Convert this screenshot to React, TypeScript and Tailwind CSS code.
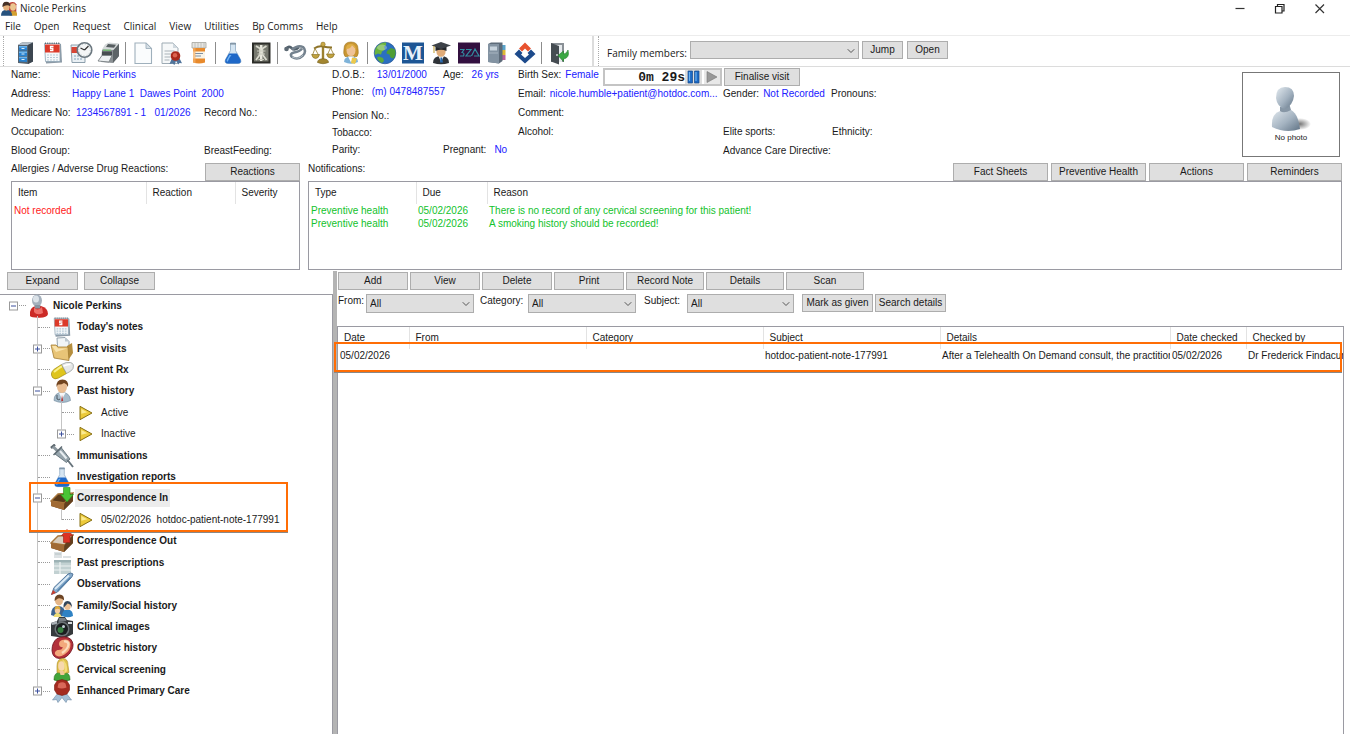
import React from 'react';
import { ChevronDown } from 'lucide-react';

type IconProps = { size?: number };

function Svg({ size = 24, children }: IconProps & { children: React.ReactNode }) {
  return (
    <svg width={size} height={size} viewBox="0 0 24 24" aria-hidden="true" className="block shrink-0">
      {children}
    </svg>
  );
}

/* ---------- toolbar icons ---------- */

const Cabinet = () => (
  <Svg>
    <path d="M5 4l4-2.500h11v19L15 23l-10-1z" fill="#56636f" />
    <path d="M5 4l4-2.500h11L15 4z" fill="#b4bfc9" />
    <path d="M15 4l5-2.500v19L15 23z" fill="#3c4650" />
    <path d="M6 5h8v4.600H6zM6 10.400h8V15H6zM6 15.800h8V21l-8-.6z" fill="#2a82cf" />
    <path d="M6 5h8v1.500H6zM6 10.400h8v1.500H6zM6 15.800h8v1.500H6z" fill="#6db5ee" />
    <path d="M8.500 7.500h3M8.500 13h3M8.500 18.500h3" stroke="#dceefa" strokeWidth="1" />
  </Svg>
);

const Calendar = ({ size }: IconProps) => (
  <Svg size={size}>
    <path d="M4 3h16l1 18.500L5 22.500z" fill="#8c9aa6" />
    <path d="M3.500 2.500h15.500v18H4.500z" fill="#f5f8fa" stroke="#8da3b3" strokeWidth=".8" />
    <path d="M4 3.500h14.600v8H4z" fill="#dc3a2a" />
    <path d="M12.500 5.500h-3v2h2.300v2H9" stroke="#fff" strokeWidth="1.300" fill="none" />
    <path d="M6 14h11M6 16.500h11M6 19h11" stroke="#b7c9d6" strokeWidth="1.200" strokeDasharray="2 1" />
    <path d="M4 2.200h15" stroke="#5b6872" strokeWidth="1.400" strokeDasharray="1 1.200" />
  </Svg>
);

const CalendarClock = () => (
  <Svg>
    <path d="M2 4h14v17.500H3z" fill="#eaf0f4" stroke="#8295a4" strokeWidth=".9" />
    <path d="M2.500 6h13v6h-13z" fill="#d84535" />
    <path d="M5 15h9M5 18h9" stroke="#a7bccb" strokeWidth="1.500" strokeDasharray="2 1" />
    <circle cx="15.500" cy="9" r="7.300" fill="#f4f6f7" stroke="#6c7880" strokeWidth="1.600" />
    <path d="M15.500 9l4-4M15.500 9l-4-2" stroke="#333" strokeWidth="1.200" />
    <circle cx="15.500" cy="9" r="5.800" fill="none" stroke="#9aa" strokeWidth=".8" strokeDasharray=".8 2.200" />
  </Svg>
);

const Printer = () => (
  <Svg>
    <path d="M5 9l6-7 11 1v12l-6 7-12-1z" fill="#8b9194" />
    <path d="M8 3.500l4-2L22 2.500 17 9 5 8.500z" fill="#d5d9da" />
    <path d="M11 3l8 .7-2 3-8-.6z" fill="#575e61" />
    <path d="M16 9.500l6-6.500v12l-6 7z" fill="#5d6467" />
    <path d="M5 10.500h10v4H5z" fill="#474d50" />
    <path d="M1 20l4-5.500h10L12 21z" fill="#edf0f1" stroke="#7a8184" strokeWidth=".9" />
    <path d="M6 9.200h8" stroke="#6fc16b" strokeWidth="1.200" />
  </Svg>
);

const BlankPage = () => (
  <Svg>
    <path d="M4 2h11l5.500 5.500V22.500H4z" fill="#fafcfd" stroke="#9fb0bc" strokeWidth="1.100" />
    <path d="M15 2v5.500h5.500z" fill="#d5dfe6" stroke="#9fb0bc" strokeWidth=".9" />
  </Svg>
);

const Certificate = () => (
  <Svg>
    <path d="M3 2h11l5 5v15.500H3z" fill="#f6f8f9" stroke="#9eabb4" strokeWidth="1" />
    <path d="M14 2v5h5z" fill="#cfd8de" />
    <path d="M5.500 10h10M5.500 13h8M5.500 16h6M5.500 19h5" stroke="#a9b2b8" strokeWidth="1" />
    <path d="M13 17l-2.500 6 3-.5 2 1.500 1.500-4 2.500 3.500 1-1.500 2.500.2-3-6z" fill="#51759c" />
    <circle cx="16.500" cy="15" r="4.800" fill="#a92a1c" />
    <circle cx="16" cy="14.300" r="2.200" fill="#dc6450" />
  </Svg>
);

const PillBottle = () => (
  <Svg>
    <path d="M5 1.500h14V7H5z" fill="#e5e5e2" stroke="#a3a39d" strokeWidth=".8" />
    <path d="M8 2v5M11 2v5M14 2v5M17 2v5" stroke="#b8b8b1" strokeWidth=".8" />
    <path d="M6 7h12v14.500q-6 2-12 0z" fill="#e88a2c" />
    <path d="M6 10.500h12v7H6z" fill="#f9f4e8" />
    <path d="M8 12.500h8M8 15h6" stroke="#7d8fa2" strokeWidth="1" />
    <path d="M6 7h2.500v15L6 21.500z" fill="#f5b068" opacity=".7" />
  </Svg>
);

const Flask = ({ size }: IconProps) => (
  <Svg size={size}>
    <path d="M9.500 2h5v7.500l5 9q1.500 4-2.500 4H7q-4 0-2.500-4l5-9z" fill="#d5e5f2" stroke="#8ea9c2" strokeWidth=".8" />
    <path d="M8 12.500h8l3.500 6q1.300 3.800-2.500 4H7q-3.800-.2-2.500-4z" fill="#1f68c8" />
    <path d="M8.500 14l-2.800 5q-.4 1.500 1 1.700 1.500-4 3.800-6.700z" fill="#6eb2f2" />
    <path d="M9 2h6v1.600H9z" fill="#8597a7" />
  </Svg>
);

const Xray = () => (
  <Svg>
    <path d="M3 1.500h18.500v21H3z" fill="#2c2d29" />
    <path d="M5 3.500h14.500v17H5z" fill="#77796f" />
    <path d="M12.200 4v16" stroke="#e9e9de" strokeWidth="2.400" />
    <path d="M7 5l4 2.500v6L7 19M17.500 5l-4 2.500v6l4 5.500" stroke="#dcdcd0" strokeWidth="1.700" fill="none" />
    <path d="M8 10h8.500M8.500 13h7.500M9.500 18.500h5.500" stroke="#c9cabd" strokeWidth="1" />
  </Svg>
);

const Shoulder = () => (
  <Svg>
    <path d="M3 8q3-4 6-.5 3 2.500 7-1.500" stroke="#53616c" strokeWidth="2.600" fill="none" />
    <path d="M9 8.500q6-5 11-2.500 4 4 0 8.500-5 5-11 1.500-3-3 2-4.500 6-1 8-4" stroke="#74828e" strokeWidth="2.500" fill="none" />
    <path d="M9 16q7 3 11-2" stroke="#b3bdc5" strokeWidth="1" fill="none" />
    <circle cx="3.500" cy="8" r="2.300" fill="#5d6a74" />
  </Svg>
);

const Scales = () => (
  <Svg>
    <path d="M12 3v16" stroke="#9c8130" strokeWidth="2.400" />
    <path d="M3 7.500q5-3 9-2t9 1" stroke="#8d732a" strokeWidth="2" fill="none" />
    <circle cx="12" cy="3.300" r="2.200" fill="#caa947" stroke="#80691f" strokeWidth=".5" />
    <path d="M4 7.500L1.500 14M4 7.500L7.500 14M19.500 7l-3 6.500M19.500 7l3.300 6.500" stroke="#a38b43" strokeWidth=".9" />
    <path d="M.6 13.500h8q-1 4-4 4t-4-4zM15.500 13h8q-1 4-4 4t-4-4z" fill="#c1a23f" stroke="#80691f" strokeWidth=".6" />
    <path d="M6.500 21.500q0-3.500 5.500-3.800 5.500.3 5.500 3.800-5.500 2.500-11 0z" fill="#a38630" stroke="#755f1b" strokeWidth=".6" />
  </Svg>
);

const BlondPatient = () => (
  <Svg>
    <path d="M5 8q0-7 7-7t7 7q1 5-1 7.500H6Q4 13 5 8z" fill="#c99632" stroke="#a0741d" strokeWidth=".6" />
    <ellipse cx="12" cy="9.500" rx="4.500" ry="5.600" fill="#efc397" />
    <path d="M7 8q5 0 6-4 2 3 4 4-1-5-5-5-5 0-5 5z" fill="#dfae45" />
    <path d="M5 21q0-5.500 7-5.500t7 5.500q-7 3.500-14 0z" fill="#7fb3d9" />
    <path d="M9 15.500l3 6 3-6z" fill="#fff" />
    <path d="M13 16.500l5 1-2 5.500-4-1z" fill="#edc94c" />
  </Svg>
);

const Globe = () => (
  <Svg>
    <circle cx="12" cy="12" r="10.800" fill="#2b6fc0" stroke="#27508a" strokeWidth=".6" />
    <path d="M4 5.500q4-4.500 9-4 1 3-2 4l1 3-3 2-1 3-3-1-3 1.500Q1 9 4 5.500z" fill="#69b33e" />
    <path d="M14 10l4-3 4 1.500q1.500 5-1.500 9l-3-1-1-3-3-1z" fill="#4f9e35" />
    <path d="M6 15.500l4 1.500 1 3-2 2q-4-2-5-5.500z" fill="#5cab3a" />
    <ellipse cx="9" cy="6.500" rx="5" ry="3" fill="#fff" opacity=".3" />
  </Svg>
);

const MimsM = () => (
  <Svg>
    <path d="M1 1.500h22v21H1z" fill="#1d5695" />
    <text x="12" y="19" textAnchor="middle" fontFamily="Liberation Serif, serif" fontWeight="700" fontSize="21" fill="#e8f2fa">M</text>
  </Svg>
);

const Graduate = () => (
  <Svg>
    <path d="M4 22q0-7 8-7t8 7q-8 2.500-16 0z" fill="#2f3338" />
    <path d="M9.500 15l2.500 6 3-6z" fill="#f1f3f5" />
    <path d="M11.500 16.500h1.500l1 5h-3z" fill="#2868ac" />
    <ellipse cx="12" cy="10.500" rx="4.600" ry="5.300" fill="#e0ab78" />
    <path d="M6.500 6h11v4q-5.500-2.500-11 0z" fill="#24272b" />
    <path d="M2.500 4.500L12 1l10 3.500L12 8z" fill="#3d4248" />
    <path d="M5 5v7" stroke="#c3a33c" strokeWidth="1.100" />
  </Svg>
);

const CalculatorLogo = () => (
  <Svg>
    <path d="M1 1.500h22v21H1z" fill="#32103f" />
    <path d="M3 8.500h4l-2 3q3 .5 1.500 3.500H3M9 8.500h5L9 15h5M14.500 15l3.500-7 4 7h-5" stroke="#328da0" strokeWidth="1.200" fill="none" />
  </Svg>
);

const AddressBook = () => (
  <Svg>
    <path d="M16 4h4.500v5H16z" fill="#5aa3c9" />
    <path d="M16 9h4.500v5H16z" fill="#dfb734" />
    <path d="M16 14h4.500v5H16z" fill="#b8619a" />
    <path d="M3 3l3-1.500h11.500V20L14 22.500 3 21z" fill="#5d6b79" />
    <path d="M3 3h11v19.500L3 21z" fill="#8393a2" />
    <path d="M5 5.500h7v4H5z" fill="#c7d3dd" />
    <path d="M4 12h9" stroke="#a8b5c1" strokeWidth="1" />
  </Svg>
);

const DiamondLogo = () => (
  <Svg>
    <path d="M12 1.500l6 6-3 3L12 7.500l-3 3-3-3z" fill="#e8532f" />
    <path d="M6 8.500l3.500 3.500L8 13.500 12 17l4-3.500-1.500-1.500L18 8.500l4.500 4.500L12 22.500 1.500 13z" fill="#1d4b8c" />
    <path d="M12 10l2.800 2.500L12 15l-2.800-2.500z" fill="#fff" />
  </Svg>
);

const ExitDoor = () => (
  <Svg>
    <path d="M4 2h13v19H4z" fill="#8a9096" />
    <path d="M6 4h9v17H6z" fill="#e5e9ec" />
    <path d="M4 2l8 3v18.500L4 20.500z" fill="#454c52" />
    <circle cx="10" cy="14" r="1" fill="#d4d8da" />
    <path d="M11 14.500l5.500-4.500v3q3 0 4.500-4 2 8-4.500 9v2.500z" fill="#3aa843" stroke="#237a2c" strokeWidth=".6" />
  </Svg>
);

/* ---------- tree icons ---------- */

const RedPerson = () => (
  <Svg>
    <path d="M4 22q-1-9 6-10h5q7 2 7 8-1 4-9 3.800T4 22z" fill="#cc2a26" />
    <path d="M8 13q3 5 8 0l1 6q-6 3-9-1z" fill="#ee706a" />
    <ellipse cx="11" cy="6.500" rx="5" ry="6" fill="#a5b1bd" />
    <ellipse cx="10" cy="5" rx="3" ry="3.500" fill="#dce3e9" />
    <path d="M8.500 11h6l-.5 3.500H9z" fill="#8794a2" />
  </Svg>
);

const Folder = () => (
  <Svg>
    <path d="M7 1l8-.5 4 4V18H8z" fill="#f1f5f7" stroke="#8b9aa5" strokeWidth=".9" />
    <path d="M15 .5v4h4z" fill="#bdc9d1" />
    <path d="M17 9l5-3 1 10-5 7.500z" fill="#b58e3e" />
    <path d="M1 8h5l2 2h10l1 13.500L4 21z" fill="#e8c477" stroke="#a57e33" strokeWidth=".8" />
    <path d="M2 9h4l2 2.500h9L6 15z" fill="#f8e3ad" />
  </Svg>
);

const Capsule = () => (
  <Svg>
    <path d="M2.500 19.500q-3-5 2-8.500l7-4.500 5 9-8 4.500q-4 2-6-.5z" fill="#dfc51d" stroke="#a28b12" strokeWidth=".7" />
    <path d="M11.500 6.500q5-3 9-2t2.500 6q-1 2.500-6.500 5z" fill="#e6e8e8" stroke="#8f9595" strokeWidth=".7" />
    <path d="M4 14q6-5 8-5.500" stroke="#faf08b" strokeWidth="2" fill="none" />
    <path d="M13.500 8q4-2 7-1.500" stroke="#fff" strokeWidth="1.500" fill="none" />
  </Svg>
);

const Doctor = () => (
  <Svg>
    <path d="M4 21.500q0-8 8-8t8.500 8q-8 4-16.500 0z" fill="#a6bccb" stroke="#6b8598" strokeWidth=".6" />
    <path d="M9 14l3 6 3.500-6z" fill="#f6f8f9" />
    <path d="M12 16l1.200 6-2 .3z" fill="#bc3030" />
    <ellipse cx="12" cy="8" rx="5" ry="6" fill="#e9bd92" />
    <path d="M6.500 8q-.5-7.500 6-7.500T18 8q-1.500-3.500-4-4-3 2-6 1.500z" fill="#71441f" />
    <path d="M7 16v4q2 1.500 3 0" stroke="#4d5964" strokeWidth="1" fill="none" />
  </Svg>
);

const YellowArrow = () => (
  <Svg size={16}>
    <path d="M3 2L21 12 3 22z" fill="#ecca3a" stroke="#877016" strokeWidth="1.500" strokeLinejoin="round" />
    <path d="M5 6l9 5-9 2z" fill="#fbeb92" />
  </Svg>
);

const Syringe = () => (
  <Svg>
    <path d="M1 4l4-3.500" stroke="#5c666d" strokeWidth="2.400" />
    <path d="M3 2.500l5 5" stroke="#8b969d" strokeWidth="3" />
    <path d="M5 10l6.500-6 8.500 11-3.500 3.500z" fill="#96a4ac" stroke="#617078" strokeWidth=".9" />
    <path d="M10 7l6.500 7.500" stroke="#e8eef1" strokeWidth="2" />
    <path d="M17.500 16l5.500 7" stroke="#66737b" strokeWidth="1.900" />
    <path d="M3.500 11l8.500-8.500" stroke="#5c6870" strokeWidth="1.500" />
  </Svg>
);

const Tray = ({ out }: { out?: boolean }) => (
  <Svg>
    <path d="M1 14L8 7l15-1v8l-9 9L1 19z" fill="#744a24" />
    <path d="M1 14L8 7l15-1-8.500 10z" fill={out ? '#d9cdbd' : '#5a3a1a'} stroke="#a8773c" strokeWidth="1.400" />
    <path d="M1 14l13.500 2-.5 7L1 19z" fill="#a06a34" />
    <path d="M14.500 16L23 6v8l-9 9z" fill="#63401e" />
    {out ? (
      <path d="M11.500 6.500L17 .5l6 6-3 .5v6.500h-6.500V7z" fill="#db3324" stroke="#9c1e14" strokeWidth=".6" />
    ) : (
      <path d="M13.500 .5h6.500v7h3.500l-6.500 7.500-6.500-7.500h3z" fill="#49c435" stroke="#288c1b" strokeWidth=".6" />
    )}
  </Svg>
);

const PrescriptionForm = () => (
  <Svg>
    <path d="M4 1h8v6H4zM13 5h8v2h-8z" fill="#dde2e4" />
    <path d="M4 9h17v14H4z" fill="#c2d1d2" />
    <path d="M4 9h17v2.500H4z" fill="#9db2b5" />
    <path d="M10 11v12" stroke="#eef3f3" strokeWidth="1.200" />
    <path d="M4 15h17M4 19h17" stroke="#edf2f2" strokeWidth="1" />
    <path d="M5 3h6" stroke="#b3c0c2" strokeWidth="1" />
  </Svg>
);

const Pen = () => (
  <Svg>
    <path d="M1.500 22.500L4 15.500 18 2q3-2 5 0-.5 3-3 5L7.500 20z" fill="#85aacb" stroke="#4e7195" strokeWidth=".9" />
    <path d="M5 17L19 3.500" stroke="#dcebf6" strokeWidth="1.800" />
    <path d="M7.500 19L20.500 5.500" stroke="#5682ab" strokeWidth="1.200" />
    <path d="M1 23l2-5 3 2.800z" fill="#c93e2e" />
  </Svg>
);

const Family = () => (
  <Svg>
    <path d="M1 21q0-9 7-9t8 9q-7 3-15 0z" fill="#3c6390" />
    <ellipse cx="9" cy="6.500" rx="4" ry="5" fill="#e5b688" />
    <path d="M4.500 7q0-6.500 5-6.500t4.500 6q-3-3-6-2z" fill="#6d4424" />
    <path d="M12 22q0-6.500 5.500-6.500T23 22q-5 2.500-11 0z" fill="#2f82c4" />
    <ellipse cx="17.500" cy="12" rx="3.300" ry="4" fill="#eec195" />
    <path d="M13.500 14q-.5-7 4-7t4.500 7q-1-4-4.500-4.500z" fill="#34465a" />
    <ellipse cx="7.500" cy="16.500" rx="2.700" ry="3" fill="#f3cda3" />
    <path d="M4.500 16q0-4 3-4t3 4q-3-2.500-6 0z" fill="#deaa3c" />
    <path d="M3.500 23q1-4 4-4t4 4z" fill="#eddc76" />
  </Svg>
);

const Camera = () => (
  <Svg>
    <path d="M1 8l6-2 2-4h6l2 3 6 1v13l-8 4L1 21z" fill="#35393c" />
    <path d="M9 3h6l1.500 3-8 1z" fill="#777e83" />
    <path d="M1 8l6-2v3l-5 1z" fill="#a9b0b5" />
    <circle cx="12" cy="14" r="7.500" fill="#6b7276" />
    <circle cx="12" cy="14" r="6" fill="#1a1e20" />
    <circle cx="10.500" cy="15" r="3" fill="#377f41" />
    <circle cx="13.500" cy="11.500" r="1.500" fill="#c3d2d7" />
    <path d="M18 7h4v2h-4z" fill="#d7dbdd" />
  </Svg>
);

const Fetus = () => (
  <Svg>
    <path d="M7 2.500q8-3.500 13.500.5 4.500 5 1 11.500-4 8-12 8-7-.5-7.500-8 0-8 5-12z" fill="#b3303a" stroke="#741722" strokeWidth=".9" />
    <path d="M12 4q7-2 8.500 3.500.5 7-6 11-6 3.500-9 .5-2-3 2-5 4 .5 5.500-2.500Q9 11 9 8t3-4z" fill="#f3a97c" />
    <path d="M14 5.500q4-.5 4.500 3Q18 13 12 17" stroke="#fbdcbd" strokeWidth="2.200" fill="none" />
  </Svg>
);

const GreenLady = () => (
  <Svg>
    <path d="M4 22q-.5-8 8-8.500 8.500.5 8 8.500-8 3-16 0z" fill="#41a43a" stroke="#256f20" strokeWidth=".6" />
    <path d="M7 8q0-7.500 6-7.500 5 0 5 7l1 7-6 1-6-1z" fill="#e1c14c" stroke="#a98b27" strokeWidth=".6" />
    <ellipse cx="11.500" cy="8" rx="3.300" ry="4.700" fill="#f7d8ae" />
    <path d="M9.500 13h4l1 4h-4z" fill="#f0c898" />
    <path d="M12 1q6 4 5 12l-3 3q2-8-2-15z" fill="#f1dc7c" />
  </Svg>
);

const Seal = () => (
  <Svg>
    <path d="M8 14L2.500 21l4-.5 1.500 3 4-5 4 5 1.500-3 4 .5-5.500-7z" fill="#a5bfd6" stroke="#6d8aa5" strokeWidth=".6" />
    <path d="M7 2l5-1.500L17 2l2.500 4v5L17 15l-5 1.500L7 15l-2.500-4V6z" fill="#a52b20" stroke="#78190f" strokeWidth=".6" />
    <path d="M8.500 4.500q4-2.500 7 0l1 4q-5 2-9 0z" fill="#d9695a" />
  </Svg>
);

const AppLogo = () => (
  <Svg size={16}>
    <path d="M12 3q8-4 11 2v14H11z" fill="#bb4236" />
    <ellipse cx="18" cy="9" rx="4.500" ry="5.500" fill="#ecc690" />
    <path d="M13 22q0-7 6-7t5 7z" fill="#d4a030" />
    <path d="M0 22q0-9 8-9t9 9z" fill="#27527e" />
    <ellipse cx="8" cy="8" rx="5" ry="6.500" fill="#e4b17c" />
    <path d="M2 9q0-8 6-8t6 7q-5-4-12 1z" fill="#453127" />
  </Svg>
);

const NoPhotoFigure = () => (
  <svg width="42" height="46" viewBox="0 0 42 46" aria-hidden="true">
    <defs>
      <linearGradient id="bust" x1="0" y1="0" x2="1" y2="1">
        <stop offset="0" stopColor="#e4ebf0" />
        <stop offset=".55" stopColor="#a3b2c0" />
        <stop offset="1" stopColor="#5f7284" />
      </linearGradient>
      <radialGradient id="floor">
        <stop offset="0" stopColor="#555" stopOpacity=".8" />
        <stop offset="1" stopColor="#555" stopOpacity="0" />
      </radialGradient>
    </defs>
    <ellipse cx="30" cy="38" rx="11" ry="6" fill="url(#floor)" />
    <path d="M2 41q-1-13 8-16l9-2q9 3 11 20-14 5-28-2z" fill="url(#bust)" />
    <path d="M10 21l9-4 2 7q-7 4-11 1z" fill="#8797a6" />
    <path d="M6 12Q6 1 15 1t9 9q-1 9-9 13Q7 21 6 12z" fill="url(#bust)" />
  </svg>
);

/* ---------- controls ---------- */

function Button({ children, className = '' }: { children: React.ReactNode; className?: string }) {
  return (
    <button
      type="button"
      className={`h-[18px] shrink-0 whitespace-nowrap border border-[#adadad] bg-[#dfdfdf] text-center leading-4 ${className}`}
    >
      {children}
    </button>
  );
}

function Select({ id, options, className = '' }: { id: string; options: string[]; className?: string }) {
  return (
    <span className={`relative inline-flex shrink-0 ${className}`}>
      <select
        id={id}
        className="h-full w-full appearance-none rounded-none border border-[#adadad] bg-[#dfdfdf] pl-[3px] leading-4"
      >
        {options.map((o) => (
          <option key={o}>{o}</option>
        ))}
      </select>
      <ChevronDown size={12} strokeWidth={2} className="pointer-events-none absolute right-[2px] top-1 text-[#555]" />
    </span>
  );
}

function Field({ label, value, className = '', gap = 'gap-1' }: { label: string; value?: string; className?: string; gap?: string }) {
  return (
    <div className={`flex shrink-0 whitespace-pre leading-[13px] ${gap} ${className}`}>
      <span>{label}</span>
      {value && <span className="text-[#2020ff]">{value}</span>}
    </div>
  );
}

/* ---------- page parts ---------- */

const menus = ['File', 'Open', 'Request', 'Clinical', 'View', 'Utilities', 'Bp Comms', 'Help'];

const toolGroups: [string, React.ComponentType][][] = [
  [['Patient list', Cabinet], ['Appointments', Calendar], ['Waiting room', CalendarClock], ['Print', Printer]],
  [['New letter', BlankPage], ['Certificate', Certificate], ['Prescription', PillBottle]],
  [['Pathology request', Flask], ['Imaging request', Xray]],
  [['Measurements', Shoulder], ['Weight', Scales], ['Patient', BlondPatient]],
  [['Internet', Globe], ['Drug reference', MimsM], ['Education', Graduate], ['Calculators', CalculatorLogo], ['Contacts', AddressBook], ['Links', DiamondLogo]],
  [['Close', ExitDoor]],
];

function TitleBar() {
  return (
    <header className="flex h-[17px] items-center pl-px pr-6 font-['Open_Sans',sans-serif] text-[10px]">
      <AppLogo />
      <h1 className="ml-[3px]">Nicole Perkins</h1>
      <div className="ml-auto flex gap-[28px]">
        <button type="button" aria-label="Minimise">
          <svg width="12" height="12" viewBox="0 0 12 12"><path d="M1.500 5.500h9" stroke="#333" strokeWidth="1.200" /></svg>
        </button>
        <button type="button" aria-label="Restore">
          <svg width="12" height="12" viewBox="0 0 12 12"><path d="M1.500 3.500h6.500v6.500H1.500zM3.500 3.500v-2H10v6.500H8" fill="none" stroke="#222" strokeWidth="1.200" /></svg>
        </button>
        <button type="button" aria-label="Close window">
          <svg width="12" height="12" viewBox="0 0 12 12"><path d="M1.500 1.500l8.500 8.500M10 1.500L1.500 10" stroke="#333" strokeWidth="1.200" /></svg>
        </button>
      </div>
    </header>
  );
}

function Toolbar() {
  return (
    <div className="flex h-[31px] items-stretch border-b border-[#dcdcdc]">
      <div className="ml-[3px] w-0 border-l border-dotted border-[#aaa]" />
      <div className="flex w-[590px] shrink-0 items-center gap-1 border-r-2 border-[#dcdcdc] pl-[9px] pt-1">
        {toolGroups.map((group, i) => (
          <React.Fragment key={i}>
            {i > 0 && <span className="h-[22px] w-0.5 border-l border-[#8c8c8c]" />}
            {group.map(([name, Icon]) => (
              <button key={name} type="button" aria-label={name}>
                <Icon />
              </button>
            ))}
          </React.Fragment>
        ))}
      </div>
      <div className="ml-1 w-0 border-l border-dotted border-[#aaa]" />
      <div className="ml-1.5 flex items-start pt-[5px]">
        <label htmlFor="family" className="mr-[3px] mt-1 w-[82px] whitespace-nowrap text-right font-['Open_Sans',sans-serif] text-[10px] leading-4">
          Family members:
        </label>
        <Select id="family" options={['']} className="mr-[3px] h-[18px] w-[169px]" />
        <Button className="mr-1 w-[41px]">Jump</Button>
        <Button className="w-[41px]">Open</Button>
      </div>
    </div>
  );
}

function Timer() {
  return (
    <div className="flex h-[18px] w-[119px] items-stretch border-2 border-[#c4c4c4]">
      <span className="flex-1 whitespace-pre text-right font-['Liberation_Mono',monospace] text-[13px] font-bold leading-[15px]">0m 29s</span>
      <button type="button" aria-label="Pause timer" className="flex w-[17px] items-center justify-center bg-[#ddd]">
        <svg width="13" height="14" viewBox="0 0 13 14">
          <path d="M1 1h4.500v12H1zM7.500 1H12v12H7.500z" fill="#1d69c4" stroke="#174c8e" strokeWidth=".7" />
          <path d="M2.500 2v9M9 2v9" stroke="#69b3f2" strokeWidth="1.200" />
        </svg>
      </button>
      <button type="button" aria-label="Start timer" className="ml-0.5 flex w-[16px] items-center justify-center bg-[#e8e8e8]">
        <svg width="12" height="12" viewBox="0 0 12 12"><path d="M1 .5L11 6 1 11.500z" fill="#999" stroke="#777" strokeWidth=".6" /></svg>
      </button>
    </div>
  );
}

function PatientHeader() {
  return (
    <section className="flex h-[96px] pl-[11px] pr-2.5">
      <div className="flex w-[321px] shrink-0 flex-col gap-1.5 pt-px">
        <div className="flex"><Field label="Name:" className="w-[61px]" /><Field label="" value="Nicole Perkins" gap="gap-0" /></div>
        <div className="flex"><Field label="Address:" className="w-[61px]" /><Field label="" value="Happy Lane 1  Dawes Point  2000" gap="gap-0" /></div>
        <div className="flex">
          <Field label="Medicare No:" className="w-[65px]" />
          <Field label="" value="1234567891 - 1   01/2026" gap="gap-0" className="w-[128px]" />
          <Field label="Record No.:" />
        </div>
        <Field label="Occupation:" />
        <div className="flex"><Field label="Blood Group:" className="w-[193px]" /><Field label="BreastFeeding:" /></div>
      </div>
      <div className="flex w-[186px] shrink-0 flex-col gap-1 pt-px">
        <div className="flex"><Field label="D.O.B.:" value="13/01/2000" gap="gap-3" className="w-[111px]" /><Field label="Age:" value="26 yrs" gap="gap-2" /></div>
        <Field label="Phone:" value="(m) 0478487557" gap="gap-2" className="mb-[7px]" />
        <Field label="Pension No.:" />
        <Field label="Tobacco:" />
        <div className="flex"><Field label="Parity:" className="w-[111px]" /><Field label="Pregnant:" value="No" gap="gap-2" /></div>
      </div>
      <div className="flex shrink-0 flex-col gap-1.5 pt-px">
        <div className="-mb-1 flex h-[17px] items-start">
          <Field label="Birth Sex:" value="Female" className="w-[85px]" />
          <div className="flex gap-0.5">
            <Timer />
            <Button className="w-[76px]">Finalise visit</Button>
          </div>
        </div>
        <div className="flex">
          <Field label="Email:" value="nicole.humble+patient@hotdoc.com..." className="w-[205px]" />
          <Field label="Gender:" value="Not Recorded" className="w-[108px]" />
          <Field label="Pronouns:" />
        </div>
        <Field label="Comment:" />
        <div className="flex"><Field label="Alcohol:" className="w-[205px]" /><Field label="Elite sports:" className="w-[109px]" /><Field label="Ethnicity:" /></div>
        <Field label="Advance Care Directive:" className="pl-[205px]" />
      </div>
      <figure className="ml-auto mt-[5px] flex h-[85px] w-[98px] shrink-0 flex-col items-center border border-[#777] pt-[13px]">
        <NoPhotoFigure />
        <figcaption className="text-[8px] leading-3">No photo</figcaption>
      </figure>
    </section>
  );
}

type Col = { name: string; width: string };

function ListTable({ cols, rows, className = '' }: { cols: Col[]; rows: string[][]; className?: string }) {
  return (
    <table className="w-full table-fixed border-collapse text-left">
      <thead>
        <tr>
          {cols.map((c, i) => (
            <th key={c.name} className={`${c.width} h-[22px] whitespace-nowrap pl-[6px] font-normal leading-3 ${i < cols.length - 1 ? 'border-r border-[#e3e3e3]' : ''}`}>
              {c.name}
            </th>
          ))}
        </tr>
      </thead>
      <tbody className={className}>
        {rows.map((r, i) => (
          <tr key={i}>
            {r.map((cell, j) => (
              <td key={j} className="h-[13px] overflow-hidden whitespace-nowrap p-0 pl-[2px] leading-[13px]">{cell}</td>
            ))}
          </tr>
        ))}
      </tbody>
    </table>
  );
}

function Alerts() {
  return (
    <section className="flex gap-2 pl-[11px] pr-2">
      <div className="w-[289px] shrink-0">
        <div className="flex h-[18px] items-start justify-between">
          <h2 className="leading-[11px]">Allergies / Adverse Drug Reactions:</h2>
          <Button className="w-[95px]">Reactions</Button>
        </div>
        <div className="h-[89px] border border-[#9a9aa2]">
          <ListTable
            className="text-[#ff2020]"
            cols={[{ name: 'Item', width: 'w-[134px]' }, { name: 'Reaction', width: 'w-[89px]' }, { name: 'Severity', width: '' }]}
            rows={[['Not recorded', '', '']]}
          />
        </div>
      </div>
      <div className="min-w-0 flex-1">
        <div className="flex h-[18px] items-start gap-[3px]">
          <h2 className="mr-auto leading-[11px]">Notifications:</h2>
          <Button className="w-[95px]">Fact Sheets</Button>
          <Button className="w-[95px]">Preventive Health</Button>
          <Button className="w-[95px]">Actions</Button>
          <Button className="w-[95px]">Reminders</Button>
        </div>
        <div className="h-[89px] border border-[#9a9aa2]">
          <ListTable
            className="text-[#12c22c]"
            cols={[{ name: 'Type', width: 'w-[107px]' }, { name: 'Due', width: 'w-[71px]' }, { name: 'Reason', width: '' }]}
            rows={[
              ['Preventive health', '05/02/2026', 'There is no record of any cervical screening for this patient!'],
              ['Preventive health', '05/02/2026', 'A smoking history should be recorded!'],
            ]}
          />
        </div>
      </div>
    </section>
  );
}

type Node = {
  label: string;
  icon: React.ReactNode;
  depth: 0 | 1 | 2;
  expander?: '+' | '-';
  last?: boolean;
  selected?: boolean;
};

const nodes: Node[] = [
  { label: 'Nicole Perkins', icon: <RedPerson />, depth: 0, expander: '-', last: true },
  { label: "Today's notes", icon: <Calendar size={22} />, depth: 1 },
  { label: 'Past visits', icon: <Folder />, depth: 1, expander: '+' },
  { label: 'Current Rx', icon: <Capsule />, depth: 1 },
  { label: 'Past history', icon: <Doctor />, depth: 1, expander: '-' },
  { label: 'Active', icon: <YellowArrow />, depth: 2 },
  { label: 'Inactive', icon: <YellowArrow />, depth: 2, expander: '+', last: true },
  { label: 'Immunisations', icon: <Syringe />, depth: 1 },
  { label: 'Investigation reports', icon: <Flask size={22} />, depth: 1 },
  { label: 'Correspondence In', icon: <Tray />, depth: 1, expander: '-', selected: true },
  { label: '05/02/2026  hotdoc-patient-note-177991', icon: <YellowArrow />, depth: 2, last: true },
  { label: 'Correspondence Out', icon: <Tray out />, depth: 1 },
  { label: 'Past prescriptions', icon: <PrescriptionForm />, depth: 1 },
  { label: 'Observations', icon: <Pen />, depth: 1 },
  { label: 'Family/Social history', icon: <Family />, depth: 1 },
  { label: 'Clinical images', icon: <Camera />, depth: 1 },
  { label: 'Obstetric history', icon: <Fetus />, depth: 1 },
  { label: 'Cervical screening', icon: <GreenLady />, depth: 1 },
  { label: 'Enhanced Primary Care', icon: <Seal />, depth: 1, expander: '+', last: true },
];

function Branch({ node }: { node: Node }) {
  return (
    <span className="relative flex w-6 shrink-0">
      <span className="flex w-3 flex-col">
        <span className={`flex-1 ${node.depth > 0 ? 'border-r border-[#c4c4c4]' : ''}`} />
        <span className={`flex-1 ${node.last ? '' : 'border-r border-[#c4c4c4]'}`} />
      </span>
      <span className="flex-1 self-center border-t border-dotted border-[#999]" />
      {node.expander && (
        <button
          type="button"
          aria-label={`${node.expander === '+' ? 'Expand' : 'Collapse'} ${node.label}`}
          className="absolute left-[7px] top-1/2 h-[9px] w-[9px] -translate-y-1/2 border border-[#999] bg-white"
        >
          <svg width="7" height="7" viewBox="0 0 7 7" className="block">
            <path d={node.expander === '+' ? 'M1 3.500h5M3.500 1v5' : 'M1 3.500h5'} stroke="#3b4f9c" strokeWidth="1" />
          </svg>
        </button>
      )}
    </span>
  );
}

function Tree() {
  return (
    <ul className="grid h-[407px] auto-rows-fr pl-0.5">
      {nodes.map((n) => (
        <li key={n.label} className="relative flex min-h-0 items-stretch">
          {n.depth >= 1 && <span className="w-6 shrink-0" />}
          {n.depth === 2 && (
            <span className="flex w-6 shrink-0"><span className="w-3 border-r border-[#c4c4c4]" /></span>
          )}
          <Branch node={n} />
          <span className="flex w-6 shrink-0 items-center justify-center">{n.icon}</span>
          <span
            className={`ml-px self-center whitespace-pre px-0.5 ${n.depth < 2 ? 'font-bold leading-[18px]' : 'leading-4'} ${n.selected ? 'bg-[#ececec]' : ''}`}
          >
            {n.label}
          </span>
          {n.selected && (
            <span className="pointer-events-none absolute -top-1.5 left-[27px] z-10 h-[50px] w-[259px] border-2 border-[#ff6d05] shadow-[0_1px_0_#888]" />
          )}
        </li>
      ))}
    </ul>
  );
}

function Correspondence() {
  return (
    <main className="flex min-w-0 flex-1 flex-col pr-1.5">
      <div className="flex gap-0.5 pl-px pt-px">
        {['Add', 'View', 'Delete', 'Print'].map((t) => (
          <Button key={t} className="w-[70px]">{t}</Button>
        ))}
        {['Record Note', 'Details', 'Scan'].map((t) => (
          <Button key={t} className="w-[78px]">{t}</Button>
        ))}
      </div>
      <div className="flex items-start pb-[13px] pl-px pt-1">
        <label htmlFor="from" className="w-[28px] leading-[14px]">From:</label>
        <Select id="from" options={['All']} className="mr-1.5 h-[19px] w-[108px]" />
        <label htmlFor="category" className="w-[48px] leading-[14px]">Category:</label>
        <Select id="category" options={['All']} className="mr-2 h-[19px] w-[108px]" />
        <label htmlFor="subject" className="w-[43px] leading-[14px]">Subject:</label>
        <Select id="subject" options={['All']} className="mr-2 h-[19px] w-[107px]" />
        <Button className="mr-0.5 w-[71px] px-0">Mark as given</Button>
        <Button className="w-[71px] px-0">Search details</Button>
      </div>
      <div className="relative flex-1 border-x border-t border-[#9a9aa2]">
        <ListTable
          cols={[
            { name: 'Date', width: 'w-[71px]' },
            { name: 'From', width: 'w-[177px]' },
            { name: 'Category', width: 'w-[177px]' },
            { name: 'Subject', width: 'w-[177px]' },
            { name: 'Details', width: 'w-[230px]' },
            { name: 'Date checked', width: 'w-[76px]' },
            { name: 'Checked by', width: '' },
          ]}
          rows={[[
            '05/02/2026', '', '', 'hotdoc-patient-note-177991',
            'After a Telehealth On Demand consult, the practition', '05/02/2026', 'Dr Frederick Findacur',
          ]]}
        />
        <div className="pointer-events-none absolute -left-1 right-px top-[15px] h-[30px] border-2 border-[#ff6d05] shadow-[0_1px_0_#888]" />
      </div>
    </main>
  );
}

export default function App() {
  return (
    <div className="flex h-screen flex-col overflow-hidden bg-white font-['Liberation_Sans',Arial,sans-serif] text-[10px] text-[#1a1a1a]">
      <TitleBar />
      <nav className="flex h-[19px] items-center gap-[13px] border-b border-[#ececec] pl-[5px] font-['Open_Sans',sans-serif] text-[10px]">
        {menus.map((m) => (
          <button key={m} type="button">{m}</button>
        ))}
      </nav>
      <Toolbar />
      <PatientHeader />
      <Alerts />
      <div className="mt-px flex min-h-0 flex-1">
        <aside className="flex w-[333px] shrink-0 flex-col">
          <div className="flex gap-1.5 pb-1 pl-[7px] pt-px">
            <Button className="w-[71px]">Expand</Button>
            <Button className="w-[71px]">Collapse</Button>
          </div>
          <div className="min-h-0 flex-1 border-r border-t border-[#9a9aa2]">
            <Tree />
          </div>
        </aside>
        <div className="w-1 shrink-0 bg-[#b4b4b4]" />
        <Correspondence />
      </div>
    </div>
  );
}
